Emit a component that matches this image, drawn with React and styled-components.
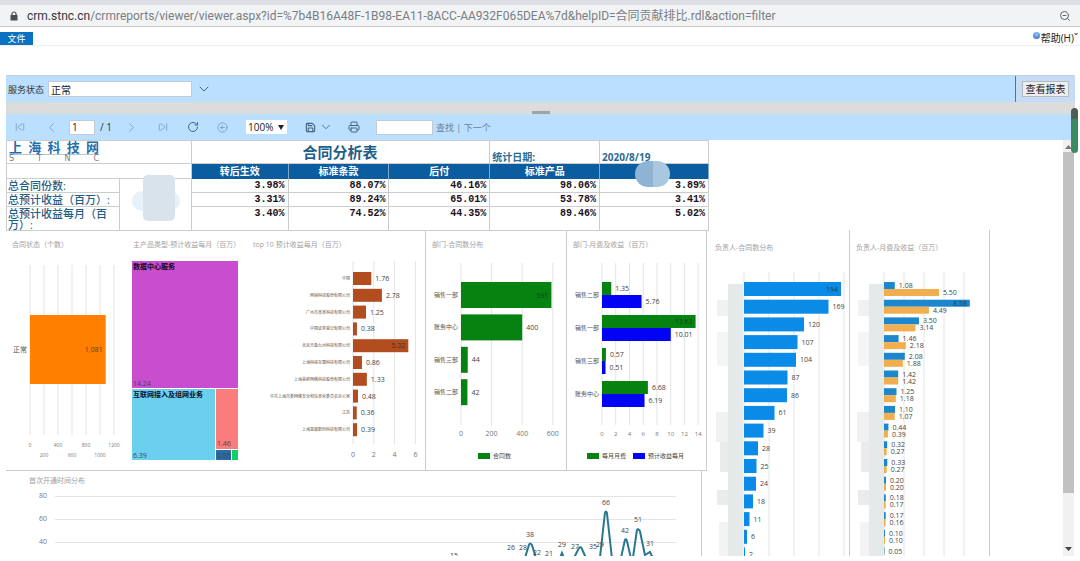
import React from 'react'
import styled, { createGlobalStyle } from 'styled-components';
import { ZoomOut, ChevronDown, ChevronLeft, ChevronRight, SkipBack, SkipForward, RotateCw, CircleArrowLeft, Save, Printer } from 'lucide-react';

const GlobalStyle = createGlobalStyle`
  * {
    box-sizing: border-box;
  }
  body {
    margin: 0;
    background: #fff;
    color: #333;
    font-family: "Open Sans", "Noto Sans CJK SC", sans-serif;
  }
`;

const Page = styled.div`
  height: 100vh;
  display: flex;
  flex-direction: column;
  padding-bottom: 5px;
  overflow: hidden;
`;

const TabStrip = styled.div`
  flex: none;
  height: 5px;
  background: #dcdfe5;
`;

const AddressBar = styled.div`
  flex: none;
  display: flex;
  align-items: center;
  height: 22px;
  padding: 0 9px;
  background: #f1f3f5;
  border-bottom: 1px solid #c9cbcd;
  color: #5f6368;
`;

const Address = styled.div`
  flex: 1;
  margin-left: 8px;
  font-family: Roboto, "Noto Sans CJK SC", sans-serif;
  font-size: 12px;
  line-height: 20px;
  white-space: nowrap;
  color: #7a7e83;

  b {
    font-weight: 400;
    color: #33363a;
  }
`;

const Ribbon = styled.div`
  flex: none;
  display: flex;
  justify-content: space-between;
  height: 19px;
  border-bottom: 1px solid #eee;
`;

const FileTab = styled.button`
  align-self: flex-end;
  width: 33px;
  height: 13px;
  padding: 0;
  border: 0;
  background: #0a72c0;
  color: #fff;
  font: 9px/13px "Open Sans", "Noto Sans CJK SC", sans-serif;
`;

const HelpLink = styled.a`
  display: flex;
  align-items: center;
  gap: 1px;
  height: 20px;
  padding-right: 2px;
  color: #222;
  font-size: 10px;
  text-decoration: none;
  white-space: nowrap;
`;

const Orb = styled.span`
  width: 7px;
  height: 7px;
  margin-bottom: 4px;
  border-radius: 50%;
  background: radial-gradient(circle at 50% 30%, #9cc6f3, #2a69bd);
`;

const Viewer = styled.main`
  flex: 1;
  min-height: 0;
  display: flex;
  flex-direction: column;
  margin: 29px 5px 0 6px;
`;

const ParamBar = styled.form`
  flex: none;
  display: flex;
  align-items: center;
  height: 27px;
  background: #bbdfff;
  border-top: 1px solid #c6d3de;
  font-size: 9px;
`;

const ParamLabel = styled.label`
  padding: 0 4px 0 2px;
`;

const Field = styled.input`
  width: ${props => props.$width}px;
  height: ${props => props.$height || 15}px;
  padding: 0 2px;
  border: 1px solid #c3cbd3;
  background: #fff;
  color: #222;
  font: 10px "Open Sans", "Noto Sans CJK SC", sans-serif;
`;

const IconButton = styled.button`
  display: flex;
  align-items: center;
  justify-content: center;
  gap: 3px;
  width: ${props => props.$width || 31}px;
  height: 20px;
  padding: 0;
  border: 0;
  background: none;
  color: ${props => (props.$dim ? '#7f9fbd' : '#4a6580')};
`;

const SubmitArea = styled.div`
  display: flex;
  align-items: center;
  align-self: stretch;
  margin-left: auto;
  padding: 0 6px;
  border-left: 1px solid #54748f;
  background: #c5dcf7;
`;

const SubmitButton = styled.button`
  width: 47px;
  height: 16px;
  padding: 0;
  border: 1px solid #b5b9bd;
  background: #eee;
  color: #222;
  font: 10px/12px "Open Sans", "Noto Sans CJK SC", sans-serif;
`;

const Splitter = styled.div`
  flex: none;
  display: flex;
  justify-content: center;
  align-items: flex-end;
  height: 12px;
  background: #dcdcdc;

  &::after {
    content: '';
    width: 18px;
    height: 3px;
    background: #a2a2a2;
  }
`;

const Toolbar = styled.div`
  flex: none;
  display: flex;
  align-items: center;
  height: 26px;
  margin-right: 1px;
  background: #bbdfff;
  color: #333;
  font-size: 10px;
`;

const PageCount = styled.span`
  width: 20px;
  padding-left: 5px;
  white-space: nowrap;
`;

const Zoom = styled.label`
  display: flex;
  align-items: center;
  width: 41px;
  height: 14px;
  margin: 0 8px;
  background: #fff;

  select {
    width: 32px;
    padding: 0 0 0 2px;
    border: 0;
    appearance: none;
    background: none;
    color: #222;
    font: 10px "Open Sans", sans-serif;
  }
`;

const Find = styled.div`
  display: flex;
  align-items: center;
  gap: 3px;
  margin-left: 10px;
  color: #6c8298;
  font-size: 9px;

  a {
    color: inherit;
    text-decoration: none;
  }
`;

const ReportArea = styled.div`
  flex: 1;
  min-height: 0;
  display: flex;
`;

const Report = styled.div`
  flex: 1;
  display: grid;
  grid-template-columns: 703fr 141fr 140fr 73fr;
  overflow: hidden;
`;

const Summary = styled.div`
  min-width: 0;
`;

const SummaryTable = styled.table`
  width: 100%;
  table-layout: fixed;
  border-collapse: separate;
  border-spacing: 0;
  border-top: 1px solid #ccc;
  border-left: 1px solid #ccc;
`;

const Row = styled.tr`
  height: ${props => props.$height}px;
`;

const Cell = styled.td`
  padding: 0 3px 0 2px;
  border-right: 1px solid #ccc;
  border-bottom: 1px solid #ccc;
  vertical-align: ${props => props.$align || 'top'};
  color: #2a6b92;
  font-size: 10px;
  font-weight: 700;
  line-height: 12px;
`;

const RowLabel = styled(Cell)`
  padding: 1px 2px 0 1px;
  font-size: 11px;
  font-weight: 500;
  text-align: left;
  line-height: 11px;
  color: #1f5f88;
`;

const Value = styled(Cell)`
  padding-top: 1px;
  color: #1b1020;
  font-family: "Liberation Mono", monospace;
  text-align: right;
`;

const ColumnHead = styled.th`
  padding: 0;
  border-right: 1px solid #7fa8c9;
  background: #0b5d9f;
  color: #fff;
  font-size: 10px;
  line-height: 13px;
`;

const Title = styled.h1`
  margin: 0;
  font-size: 15px;
  line-height: 22px;
  text-align: center;
  color: #1f5f88;
`;

const Logo = styled.div`
  width: 90px;
`;

const LogoLine = styled.div`
  display: flex;
  justify-content: space-between;
  color: #1f6fae;
  font-size: 13px;
  line-height: 13px;
`;

const LogoLatin = styled(LogoLine)`
  border-top: 1px solid #b9c4cc;
  color: #777c82;
  font-family: "DejaVu Sans", sans-serif;
  font-size: 8px;
  font-weight: 400;
  line-height: 8px;
`;

const Mosaic = styled.span`
  position: absolute;
  left: ${props => props.$left}px;
  top: ${props => props.$top}px;
  width: ${props => props.$width}px;
  height: ${props => props.$height}px;
  border-radius: ${props => props.$radius}px;
  background: ${props => props.$fill};
`;

const MosaicCell = styled(Cell)`
  position: relative;
`;

const MosaicHead = styled(ColumnHead)`
  position: relative;
`;

const Panels = styled.div`
  display: grid;
  grid-template-columns: 121fr 120fr 179fr 141fr 140fr 2fr;
`;

const Panel = styled.section`
  min-width: 0;
  border-right: ${props => (props.$edge ? '1px solid #ccc' : '0')};
  border-bottom: ${props => (props.$open ? '0' : '1px solid #ccc')};
  margin-top: ${props => (props.$tall ? 90 : 0)}px;
`;

const PanelTitle = styled.h2`
  margin: 0;
  padding: ${props => (props.$tall ? '13px 6px 1px' : '9px 6px 5px')};
  color: #a2a2a2;
  font-size: 7px;
  font-weight: 400;
  line-height: 10px;
  white-space: nowrap;
`;

const Chart = styled.svg`
  display: block;
  width: 100%;

  text {
    dominant-baseline: central;
    font-size: 7px;
    fill: #444;
  }
  text.axis {
    fill: #777;
    text-anchor: middle;
  }
  text.category {
    fill: #555;
    text-anchor: end;
  }
  text.inside {
    fill: #222;
    fill-opacity: 0.75;
    text-anchor: end;
  }
  text.name {
    font-weight: 700;
    fill: #0a0a28;
  }
`;

const Timeline = styled.section`
  width: 99%;
  border-right: 1px solid #ccc;
`;

const TimelineTitle = styled(PanelTitle)`
  padding: 5px 23px 2px;
`;

const ScrollTrack = styled.div`
  flex: none;
  display: flex;
  flex-direction: column;
  align-items: center;
  width: 11px;
  margin-right: 1px;
  background: #f1f1f1;
`;

const Thumb = styled.div`
  flex: 341;
  width: 100%;
  background: #c1c1c1;
`;

const Gap = styled.div`
  flex: 51;
`;

const Arrow = styled.svg`
  flex: none;
  width: 7px;
  height: 12px;
`;

const OuterThumb = styled.div`
  position: absolute;
  right: 2px;
  top: 108px;
  width: 7px;
  height: 45px;
  border-radius: 4px;
  background: linear-gradient(#4e5d57 10px, #3d8a60 12px);
`;

const columns = ['转后生效', '标准条款', '后付', '标准产品'];

const summary = [
  { label: '总合同份数:', height: 14, values: ['3.98%', '88.07%', '46.16%', '98.06%', '3.89%'] },
  { label: '总预计收益（百万）:', height: 14, values: ['3.31%', '89.24%', '65.01%', '53.78%', '3.41%'] },
  { label: '总预计收益每月（百万）:', height: 24, values: ['3.40%', '74.52%', '44.35%', '89.46%', '5.02%'] },
];

const status = [['正常', [1081, '1,081']]];

const topTen = [
  ['中国', [1.76]],
  ['网宿科技股份有限公司', [2.78]],
  ['广州市某某科技有限公司', [1.25]],
  ['中国证券登记有限公司', [0.38]],
  ['北京天盈九州科技有限公司', [5.32]],
  ['上海科探互盟科技有限公司', [0.86]],
  ['上海美鲜网络科技股份有限公司', [1.33]],
  ['中共上海市委网络安全和信息化委员会办公室', [0.48]],
  ['江苏', [0.36]],
  ['上海宽娱数码科技有限公司', [0.39]],
];

const deptCount = [
  ['销售一部', [591]],
  ['账务中心', [400]],
  ['销售三部', [44]],
  ['销售二部', [42]],
];

const deptFees = [
  ['销售二部', [1.35], [5.76]],
  ['销售一部', [13.62], [10.01]],
  ['销售三部', [0.57], [0.51]],
  ['账务中心', [6.68], [6.19]],
];

const ownerCount = [194, 169, 120, 107, 104, 87, 86, 61, 39, 28, 25, 24, 18, 11, 6, 2].map(n => ['', [n]]);

const ownerFees = [
  [1.08, 5.5], [8.58, 4.49], [3.5, 3.14], [1.46, 2.18], [2.08, 1.88], [1.42, 1.42],
  [1.25, 1.18], [1.1, 1.07], [0.44, 0.39], [0.32, 0.27], [0.33, 0.27], [0.2, 0.2],
  [0.18, 0.17], [0.17, 0.16], [0.1, 0.1], [0.05],
].map(pair => ['', ...pair.map(n => [n, n.toFixed(2)])]);

const peaks = [
  [454, 556, 15], [511, 548, 26], [523, 548, 28], [530, 535, 38], [537, 553, 22], [549, 554, 21],
  [562, 545, 29], [575, 547, 27], [593, 547, 35], [600, 545, 29], [606, 503, 66],
  [625, 531, 42], [638, 520, 51], [650, 544, 31],
];

const Bars = ({ width, height, origin, scale, top, step, bar, colors, rows, ticks, grid, axisY, axisSize = 6, catSize = 6, stagger = 0, legend = [], children }) => {
  const max = Math.max(...rows.flatMap(([, ...values]) => values.map(v => v[0])));
  return (
    <Chart viewBox={`0 0 ${width} ${height}`}>
      {ticks.map((t, i) => (
        <g key={t}>
          <line x1={origin + t * scale} x2={origin + t * scale} y1={grid[0]} y2={grid[1]} stroke="#e4e4e4" />
          {axisY && (
            <text className="axis" x={origin + t * scale} y={axisY + (i % 2) * stagger} style={{ fontSize: axisSize }}>{t}</text>
          )}
        </g>
      ))}
      {children}
      {rows.map(([label, ...values], r) => (
        <g key={r}>
          {label && (
            <text className="category" x={origin - 3} y={top + r * step + (bar * values.length) / 2} style={{ fontSize: catSize }}>{label}</text>
          )}
          {values.map(([n, shown], s) => {
            const y = top + r * step + s * bar;
            const inside = n === max;
            const end = origin + n * scale;
            return (
              <g key={s}>
                <rect x={origin} y={y} width={n * scale} height={bar} fill={colors[s]} />
                <text className={inside ? 'inside' : undefined} x={inside ? end - 3 : end + 4} y={y + bar / 2}>{shown || n}</text>
              </g>
            );
          })}
        </g>
      ))}
      {legend.map(([x, name], i) => (
        <g key={name}>
          <rect x={x} y="198" width="12" height="6" fill={colors[i]} />
          <text x={x + 15} y="201" style={{ fontSize: 6 }}>{name}</text>
        </g>
      ))}
    </Chart>
  );
};

const Treemap = () => (
  <Chart viewBox="0 0 120 215">
    <rect x="5" y="6" width="106" height="127" fill="#c94dcf" />
    <rect x="5" y="134" width="83" height="71" fill="#6bd0ee" />
    <rect x="89" y="134" width="22" height="60" fill="#fb7c7c" />
    <rect x="89" y="195" width="15" height="10" fill="#2b6ca3" />
    <rect x="105" y="195" width="6" height="10" fill="#12cf68" />
    <text className="name" x="6" y="11">数据中心服务</text>
    <text x="6" y="128">14.24</text>
    <text className="name" x="6" y="139">互联网接入及组网业务</text>
    <text x="6" y="200">6.39</text>
    <text x="90" y="188">1.46</text>
    <text x="90" y="200">0.55</text>
  </Chart>
);

// blanked-out owner names
const Redacted = () => (
  <g>
    <rect x="19" y="30" width="15" height="272" fill="#e6e9ea" />
    <rect x="8" y="46" width="11" height="16" fill="#f1f1f1" />
    <rect x="8" y="78" width="11" height="34" fill="#f5f5f5" />
    <rect x="7" y="158" width="12" height="30" fill="#f1f1f1" />
    <rect x="11" y="188" width="8" height="30" fill="#ebebeb" />
    <rect x="8" y="236" width="11" height="15" fill="#ebebeb" />
    <rect x="10" y="268" width="9" height="34" fill="#f3f3f3" />
  </g>
);

const Header = () => (
  <SummaryTable>
    <colgroup>
      {[113, 72, 97, 101, 101, 110, 109].map((w, i) => <col key={i} style={{ width: `${w / 7.03}%` }} />)}
    </colgroup>
    <tbody>
      <Row $height={23}>
        <Cell colSpan={2}>
          <Logo>
            <LogoLine>{[...'上海科技网'].map(c => <span key={c}>{c}</span>)}</LogoLine>
            <LogoLatin>{[...'STNC'].map(c => <span key={c}>{c}</span>)}</LogoLatin>
          </Logo>
        </Cell>
        <Cell colSpan={3} $align="middle"><Title>合同分析表</Title></Cell>
        <Cell $align="bottom">统计日期:</Cell>
        <Cell $align="bottom">2020/8/19</Cell>
      </Row>
      <Row $height={15}>
        <Cell colSpan={2} />
        {columns.map(name => <ColumnHead key={name} scope="col">{name}</ColumnHead>)}
        <MosaicHead>
          <Mosaic $left={35} $top={-3} $width={35} $height={26} $radius={13} $fill="linear-gradient(90deg, #8fb4d3 50%, #a9c8e0 50%)" />
        </MosaicHead>
      </Row>
      {summary.map((row, i) => (
        <Row key={row.label} $height={row.height}>
          <RowLabel as="th" scope="row">{row.label}</RowLabel>
          {i === 0 && (
            <MosaicCell rowSpan={3}>
              <Mosaic $left={12} $top={12} $width={48} $height={20} $radius={10} $fill="#e9f1f8" />
              <Mosaic $left={23} $top={-4} $width={32} $height={46} $radius={5} $fill="#d8e3ec" />
            </MosaicCell>
          )}
          {row.values.map((v, n) => <Value key={n}>{v}</Value>)}
        </Row>
      ))}
    </tbody>
  </SummaryTable>
);

const App = () => (
  <Page>
    <GlobalStyle />
    <TabStrip />
    <AddressBar>
      <svg width="10" height="10" viewBox="0 0 10 10">
        <path d="M3 4.500V3a2 2 0 0 1 4 0v1.500" fill="none" stroke="#4a4d51" strokeWidth="1.200" />
        <rect x="1.500" y="4" width="7" height="5.500" rx="0.500" fill="#4a4d51" />
      </svg>
      <Address>
        <b>crm.stnc.cn</b>/crmreports/viewer/viewer.aspx?id=%7b4B16A48F-1B98-EA11-8ACC-AA932F065DEA%7d&amp;helpID=合同贡献排比.rdl&amp;action=filter
      </Address>
      <ZoomOut size={12} />
    </AddressBar>
    <Ribbon>
      <FileTab>文件</FileTab>
      <HelpLink href="#help"><Orb />帮助(H)ˇ</HelpLink>
    </Ribbon>
    <Viewer>
      <ParamBar onSubmit={e => e.preventDefault()}>
        <ParamLabel htmlFor="status">服务状态</ParamLabel>
        <Field id="status" $width={144} $height={16} defaultValue="正常" />
        <IconButton type="button" $width={24} aria-label="展开"><ChevronDown size={16} strokeWidth={1.5} /></IconButton>
        <SubmitArea><SubmitButton>查看报表</SubmitButton></SubmitArea>
      </ParamBar>
      <Splitter />
      <Toolbar>
        <IconButton $dim $width={28} aria-label="第一页"><SkipBack size={10} strokeWidth={2} /></IconButton>
        <IconButton $dim $width={35} aria-label="上一页"><ChevronLeft size={15} strokeWidth={1.5} /></IconButton>
        <Field $width={26} aria-label="页码" defaultValue="1" />
        <PageCount>/ 1</PageCount>
        <IconButton $dim $width={32} aria-label="下一页"><ChevronRight size={15} strokeWidth={1.5} /></IconButton>
        <IconButton $dim aria-label="最后一页"><SkipForward size={10} strokeWidth={2} /></IconButton>
        <IconButton $width={29} aria-label="刷新"><RotateCw size={12} strokeWidth={2} /></IconButton>
        <IconButton $dim aria-label="返回"><CircleArrowLeft size={11} strokeWidth={2} /></IconButton>
        <Zoom>
          <select aria-label="缩放"><option>100%</option></select>
          <svg width="6" height="6" viewBox="0 0 6 6"><path d="M0 1h6L3 6z" fill="#222" /></svg>
        </Zoom>
        <IconButton $width={47} aria-label="导出"><Save size={11} strokeWidth={2.5} /><ChevronDown size={14} strokeWidth={1.5} /></IconButton>
        <IconButton $width={24} aria-label="打印"><Printer size={12} strokeWidth={2} /></IconButton>
        <Find>
          <Field $width={57} aria-label="查找文本" />
          <span><a href="#find">查找</a> | <a href="#next">下一个</a></span>
        </Find>
      </Toolbar>
      <ReportArea>
        <Report>
          <Summary>
            <Header />
            <Panels>
              <Panel>
                <PanelTitle>合同状态（个数）</PanelTitle>
                <Bars width={121} height={215} origin={24} scale={0.07} top={60} step={69} bar={69} colors={['#ff7f00']}
                  rows={status} ticks={[0, 200, 400, 600, 800, 1000, 1200]} grid={[10, 180]} axisY={190} axisSize={5} catSize={7} stagger={10} />
              </Panel>
              <Panel>
                <PanelTitle>主产品类型-预计收益每月（百万）</PanelTitle>
                <Treemap />
              </Panel>
              <Panel $edge>
                <PanelTitle>top 10 预计收益每月（百万）</PanelTitle>
                <Bars width={178} height={215} origin={106} scale={10.4} top={17} step={16.8} bar={13} colors={['#b14d1e']}
                  rows={topTen} ticks={[0, 2, 4, 6]} grid={[6, 189]} axisY={199} axisSize={7} catSize={4} />
              </Panel>
              <Panel $edge>
                <PanelTitle>部门-合同数分布</PanelTitle>
                <Bars width={140} height={215} origin={35} scale={0.153} top={27} step={32.4} bar={26} colors={['#05820f']}
                  rows={deptCount} ticks={[0, 200, 400, 600]} grid={[8, 170]} axisY={178} axisSize={7} legend={[[52, '合同数']]} />
              </Panel>
              <Panel $edge>
                <PanelTitle>部门-月费及收益（百万）</PanelTitle>
                <Bars width={139} height={215} origin={35} scale={6.87} top={27} step={33} bar={13} colors={['#05820f', '#0202f5']}
                  rows={deptFees} ticks={[0, 2, 4, 6, 8, 10, 12, 14]} grid={[8, 170]} axisY={179} legend={[[20, '每月月费'], [66, '预计收益每月']]} />
              </Panel>
            </Panels>
            <Timeline>
              <TimelineTitle>首次开通时间分布</TimelineTitle>
              <Chart viewBox="6 488 695 68">
                {[80, 60, 40].map((n, i) => (
                  <g key={n}>
                    <text className="axis" x="43" y={496 + i * 23}>{n}</text>
                    <line x1="55" x2="676" y1={496.5 + i * 23} y2={496.5 + i * 23} stroke="#e4e4e4" />
                  </g>
                ))}
                <path
                  d="M525 558L529 545Q530 542 532 545L536 558M560 558L562 553L564 558M574 558L579 548Q581 546 582 549L586 558M600 558L605 513Q606 510 607 513L612 558M621 558L625 540Q626 538 627 541L631 558M633 558L637 530Q638 528 640 531L645 555L650 552L653 558"
                  fill="none" stroke="#2a7890" strokeWidth="2"
                />
                {peaks.map(([x, y, n]) => <text key={x} x={x} y={y} textAnchor="middle">{n}</text>)}
              </Chart>
            </Timeline>
          </Summary>
          <Panel $edge $open $tall>
            <PanelTitle $tall>负责人-合同数分布</PanelTitle>
            <Bars width={140} height={302} origin={35} scale={0.5} top={28} step={17.7} bar={14} colors={['#0a8be8']}
              rows={ownerCount} ticks={[0, 50, 100, 150, 200]} grid={[18, 302]}>
              <Redacted />
            </Bars>
          </Panel>
          <Panel $edge $open $tall>
            <PanelTitle $tall>负责人-月费及收益（百万）</PanelTitle>
            <Bars width={139} height={302} origin={34} scale={10} top={28} step={17.7} bar={7} colors={['#1c87cc', '#f0ae4e']}
              rows={ownerFees} ticks={[0, 2, 4, 6, 8]} grid={[18, 302]}>
              <Redacted />
            </Bars>
          </Panel>
        </Report>
        <ScrollTrack>
          <Arrow viewBox="0 0 7 12"><path d="M0 9L3.500 5L7 9z" fill="#777" /></Arrow>
          <Thumb />
          <Gap />
          <Arrow viewBox="0 0 7 12"><path d="M0 3L3.500 7L7 3z" fill="#444" /></Arrow>
        </ScrollTrack>
      </ReportArea>
    </Viewer>
    <OuterThumb />
  </Page>
);

export default App
